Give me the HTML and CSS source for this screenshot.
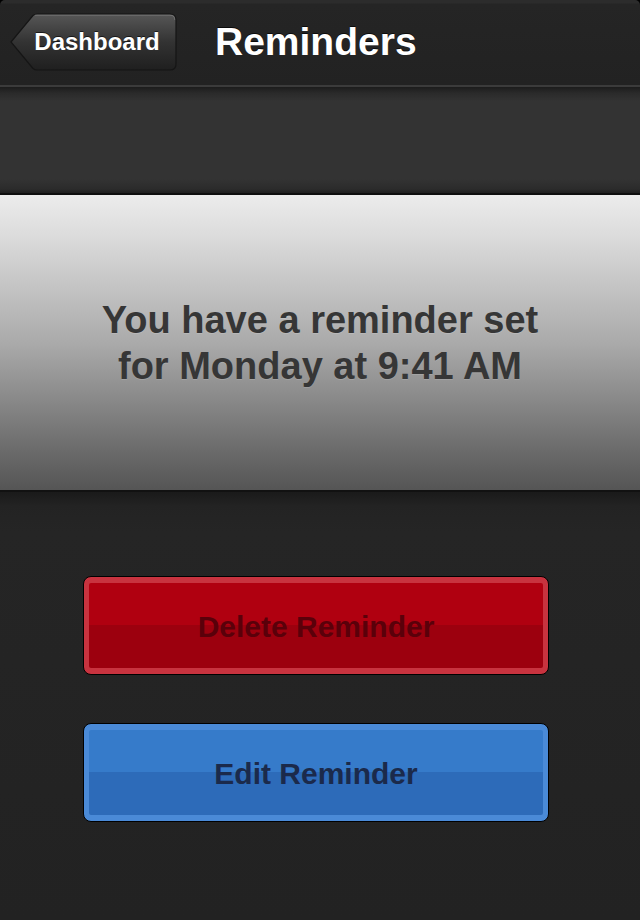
FILE: index.html
```html
<!DOCTYPE html>
<html>
<head>
<meta charset="utf-8">
<link rel="stylesheet" href="styles.css">
</head>
<body>
<div class="screen">
  <header class="navbar">
    <a class="back">
      <svg class="back-shape" width="168" height="58" viewBox="0 0 168 58">
        <defs>
          <linearGradient id="bg" x1="0" y1="0" x2="0" y2="1">
            <stop offset="0" stop-color="#575757"/>
            <stop offset="0.5" stop-color="#333"/>
            <stop offset="1" stop-color="#1f1f1f"/>
          </linearGradient>
        </defs>
        <path d="M1 29 L23 2.5 Q24.5 1 27 1 L160 1 Q166 1 166 7 L166 51 Q166 57 160 57 L27 57 Q24.5 57 23 55.5 Z" fill="url(#bg)" stroke="#151515" stroke-width="1.2"/>
        <path d="M25 2.2 L160 2.2 Q164.8 2.2 164.8 7" fill="none" stroke="rgba(255,255,255,0.18)" stroke-width="1"/>
      </svg>
      <span class="back-label">Dashboard</span>
    </a>
    <h1 class="title">Reminders</h1>
  </header>
  <div class="spacer"></div>
  <section class="panel">
    <p class="message">You have a reminder set<br>for Monday at 9:41 AM</p>
  </section>
  <main class="actions">
    <button class="btn btn-red"><span class="btn-inner">Delete Reminder</span></button>
    <button class="btn btn-blue"><span class="btn-inner">Edit Reminder</span></button>
  </main>
</div>
</body>
</html>
```

FILE: styles.css
```css
* { box-sizing: border-box; }
html, body {
  margin: 0;
  padding: 0;
  background: #000;
}
body {
  width: 640px;
  height: 920px;
  overflow: hidden;
  font-family: "Liberation Sans", Arial, sans-serif;
}
.screen {
  display: flex;
  flex-direction: column;
  width: 640px;
  height: 920px;
}
.navbar {
  height: 87px;
  flex: none;
  display: flex;
  align-items: center;
  padding: 0 0 2px 10px;
  background: linear-gradient(#2c2c2c 0, #2c2c2c 3px, #252525 4px, #222 84px);
  border-bottom: 2px solid #3b3b3b;
  border-radius: 5px 5px 0 0;
}
.back {
  position: relative;
  display: flex;
  align-items: center;
  justify-content: center;
  width: 168px;
  height: 58px;
  padding-left: 6px;
  margin-top: 1px;
}
.back-shape {
  position: absolute;
  left: 0;
  top: 0;
}
.back-label {
  position: relative;
  color: #fff;
  font-weight: bold;
  font-size: 24px;
  text-shadow: 0 -1px 0 rgba(0,0,0,0.6);
}
.title {
  margin: 0 0 0 37px;
  color: #fff;
  font-size: 39px;
  font-weight: bold;
  text-shadow: 0 -1px 0 rgba(0,0,0,0.7);
}
.spacer {
  height: 108px;
  flex: none;
  background: linear-gradient(#1c1c1c 0, #2a2a2a 6px, #333 14px, #333 92px, #2b2b2b 102px, #1f1f1f 106px);
  border-bottom: 2px solid #0e0e0e;
}
.panel {
  height: 297px;
  flex: none;
  display: flex;
  align-items: center;
  justify-content: center;
  background: linear-gradient(#ececec 0, #dcdcdc 40px, #a9a9a9 150px, #6e6e6e 250px, #555 295px);
  border-bottom: 2px solid #111;
}
.message {
  margin: 0;
  text-align: center;
  color: #363636;
  font-size: 38px;
  font-weight: bold;
  line-height: 46px;
  text-shadow: 0 1px 0 rgba(255,255,255,0.15);
}
.actions {
  flex: 1;
  display: flex;
  flex-direction: column;
  align-items: flex-start;
  gap: 48px;
  padding: 84px 0 0 83px;
  background: linear-gradient(#1a1a1a 0, #232323 14px, #252525 40px, #222 100%);
}
.btn {
  display: block;
  width: 466px;
  height: 99px;
  padding: 6px 5px;
  margin: 0;
  border: 1px solid #000;
  border-radius: 8px;
  font-family: inherit;
  cursor: pointer;
}
.btn-inner {
  display: flex;
  align-items: center;
  justify-content: center;
  width: 100%;
  height: 100%;
  border-radius: 2px;
  font-size: 30px;
  font-weight: bold;
  padding-top: 2px;
}
.btn-red {
  background: #c8333f;
}
.btn-red .btn-inner {
  background: linear-gradient(#b00010 0, #b00010 50%, #9c000e 50%, #9c000e 100%);
  color: #5a000a;
}
.btn-blue {
  background: #4a8ad7;
}
.btn-blue .btn-inner {
  background: linear-gradient(#367bca 0, #367bca 50%, #2d6bb9 50%, #2d6bb9 100%);
  color: #1b2a4b;
}
```
